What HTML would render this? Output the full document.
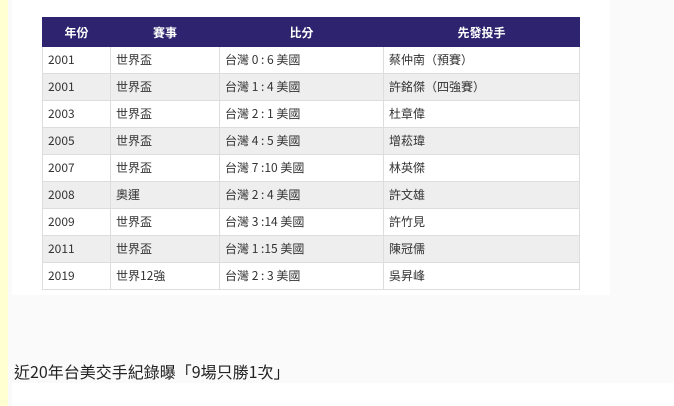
<!DOCTYPE html>
<html><head><meta charset="utf-8"><style>
html,body{margin:0;padding:0;width:674px;height:406px;overflow:hidden;background:#fafafa;font-family:"Liberation Sans","Noto Sans CJK TC",sans-serif;}
.yel{position:absolute;left:0;top:0;width:8px;height:406px;background:#ffffd2;}
.panel{position:absolute;left:12px;top:0;width:598px;height:295px;background:#fff;}
.bot{position:absolute;left:12px;top:383px;width:662px;height:23px;background:#fff;}
table{position:absolute;left:42px;top:17px;border-collapse:collapse;width:538px;font-size:12px;color:#333;table-layout:fixed;font-family:"Noto Sans CJK TC","Liberation Sans",sans-serif;}
th{background:#2e236e;color:#fff;height:28px;font-weight:bold;font-size:12px;padding:0;border:1px solid #2e236e;}
td{height:26px;padding:0 0 0 5px;border:1px solid #ddd;line-height:14px;}
tr:nth-child(odd) td{background:#eee;}
.cap{position:absolute;left:14px;top:360px;font-size:16px;color:#222;font-family:"Noto Sans CJK TC","Liberation Sans",sans-serif;line-height:22px;}
</style></head><body>
<div class="yel"></div>
<div class="panel"></div>
<div class="bot"></div>
<table>
<tr><th style="width:67px">年份</th><th style="width:108px">賽事</th><th style="width:163px">比分</th><th>先發投手</th></tr>
<tr><td>2001</td><td>世界盃</td><td>台灣 0 : 6 美國</td><td>蔡仲南（預賽）</td></tr>
<tr><td>2001</td><td>世界盃</td><td>台灣 1 : 4 美國</td><td>許銘傑（四強賽）</td></tr>
<tr><td>2003</td><td>世界盃</td><td>台灣 2 : 1 美國</td><td>杜章偉</td></tr>
<tr><td>2005</td><td>世界盃</td><td>台灣 4 : 5 美國</td><td>增菘瑋</td></tr>
<tr><td>2007</td><td>世界盃</td><td>台灣 7 :10 美國</td><td>林英傑</td></tr>
<tr><td>2008</td><td>奧運</td><td>台灣 2 : 4 美國</td><td>許文雄</td></tr>
<tr><td>2009</td><td>世界盃</td><td>台灣 3 :14 美國</td><td>許竹見</td></tr>
<tr><td>2011</td><td>世界盃</td><td>台灣 1 :15 美國</td><td>陳冠儒</td></tr>
<tr><td>2019</td><td>世界12強</td><td>台灣 2 : 3 美國</td><td>吳昇峰</td></tr>
</table>
<div class="cap">近20年台美交手紀錄曝「9場只勝1次」</div>
</body></html>
